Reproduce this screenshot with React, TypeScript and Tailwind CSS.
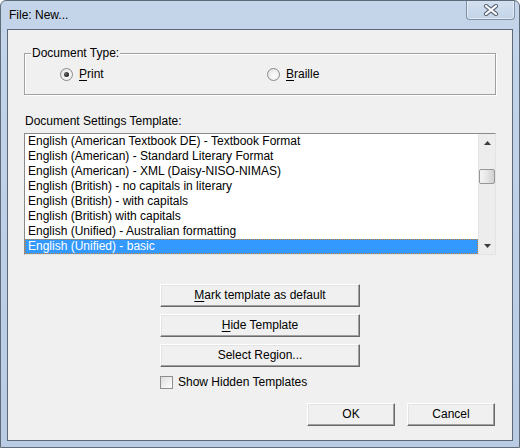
import React from "react";

const font = "font-['Segoe_UI','Liberation_Sans',Arial,sans-serif]";

function Radio({ checked }: { checked?: boolean }) {
  return (
    <span className="flex items-center justify-center w-[13px] h-[13px] rounded-full border border-[#8a8a8a] bg-[radial-gradient(circle_at_60%_60%,#ffffff,#dcdcdc)] shrink-0">
      {checked && <span className="w-[5px] h-[5px] rounded-full bg-[radial-gradient(circle_at_35%_35%,#6a6a6a,#000000)]" />}
    </span>
  );
}

function Btn({ children, className }: { children: React.ReactNode; className?: string }) {
  return (
    <div
      className={
        "flex items-center justify-center h-[23px] bg-[#f0f0f0] border border-t-[#ffffff] border-l-[#ffffff] border-r-[#696969] border-b-[#696969] shadow-[inset_-1px_-1px_0_#a0a0a0,inset_1px_1px_0_#e3e3e3] text-[12px] leading-[15px] text-black " +
        (className ?? "")
      }
    >
      {children}
    </div>
  );
}

const items = [
  "English (American Textbook DE) - Textbook Format",
  "English (American) - Standard Literary Format",
  "English (American) - XML (Daisy-NISO-NIMAS)",
  "English (British) - no capitals in literary",
  "English (British) - with capitals",
  "English (British) with capitals",
  "English (Unified) - Australian formatting",
  "English (Unified) - basic",
];

export default function App() {
  return (
    <div className={"w-[520px] h-[448px] bg-white " + font}>
      <div className="relative w-[520px] h-[448px] border border-[#5f6b79] rounded-t-[6px] bg-gradient-to-b from-[#c4d5ea] via-[#bed0e7] to-[#b9cce4] flex flex-col px-[6px] pb-[6px]">
        {/* title */}
        <div className="h-[28px] flex items-center pl-[2px] text-[12px] leading-[15px] text-black">File: New...</div>
        {/* close button */}
        <div className="absolute top-0 right-[4px] w-[49px] h-[19px] rounded-b-[4px] border border-t-0 border-[#7f90a6] bg-gradient-to-b from-[#d3e0ef] to-[#c3d4e8] shadow-[inset_0_-1px_0_#e4ecf6,inset_1px_0_0_#e4ecf6,inset_-1px_0_0_#e4ecf6] flex items-center justify-center">
          <svg width="16" height="12" viewBox="0 0 16 12">
            <path d="M3 2 L13 10 M13 2 L3 10" stroke="#5b6675" strokeWidth="4.2" strokeLinecap="round" />
            <path d="M3 2 L13 10 M13 2 L3 10" stroke="#ffffff" strokeWidth="2.2" strokeLinecap="round" />
          </svg>
        </div>
        {/* client */}
        <div className="flex-1 border border-[#5a6878] bg-[#f0f0f0] flex flex-col text-[12px] leading-[15px] text-black">
          {/* group box */}
          <div className="relative mt-[23px] ml-[16px] w-[472px] h-[42px] border border-[#a0a0a0] shadow-[inset_1px_1px_0_#ffffff,1px_1px_0_#ffffff]">
            <span className="absolute left-[6px] top-[-8px] px-[1px] bg-[#f0f0f0]">Document Type:</span>
            <div className="flex pl-[35px] pt-[13px]">
              <div className="flex items-center gap-[6px] w-[207px]">
                <Radio checked />
                <span>
                  <u className="underline-offset-2">P</u>rint
                </span>
              </div>
              <div className="flex items-center gap-[6px]">
                <Radio />
                <span>
                  <u className="underline-offset-2">B</u>raille
                </span>
              </div>
            </div>
          </div>

          <div className="mt-[19px] ml-[17px]">Document Settings Template:</div>

          {/* list box */}
          <div className="mt-[4px] ml-[16px] w-[472px] h-[122px] flex bg-white border border-t-[#8a8a8a] border-l-[#8a8a8a] border-r-[#e3e3e3] border-b-[#e3e3e3]">
            <div className="flex-1 flex flex-col">
              {items.map((t, i) =>
                i === items.length - 1 ? (
                  <div
                    key={t}
                    className="h-[15px] pl-[3px] leading-[15px] bg-[#3399ff] text-white outline-1 outline-dotted outline-[#c98236] -outline-offset-1 whitespace-nowrap"
                  >
                    {t}
                  </div>
                ) : (
                  <div key={t} className="h-[15px] pl-[3px] leading-[15px] whitespace-nowrap">
                    {t}
                  </div>
                )
              )}
            </div>
            <div className="w-[17px] flex flex-col bg-[#ededed] border-l border-[#e4e4e4]">
              <div className="h-[17px] flex items-center justify-center">
                <svg width="7" height="4" viewBox="0 0 7 4">
                  <path d="M0 4 L3.5 0 L7 4 Z" fill="#3c3c3c" />
                </svg>
              </div>
              <div className="h-[18px]" />
              <div className="h-[15px] w-[16px] rounded-[2px] border border-[#979797] bg-gradient-to-r from-[#f5f5f5] via-[#e6e6e6] to-[#cfcfcf]" />
              <div className="flex-1" />
              <div className="h-[17px] flex items-center justify-center">
                <svg width="7" height="4" viewBox="0 0 7 4">
                  <path d="M0 0 L7 0 L3.5 4 Z" fill="#3c3c3c" />
                </svg>
              </div>
            </div>
          </div>

          {/* buttons */}
          <div className="mt-[29px] w-[200px] mx-auto flex flex-col gap-[7px]">
            <Btn>
              <span>
                <u className="underline-offset-2">M</u>ark template as default
              </span>
            </Btn>
            <Btn>
              <span>
                <u className="underline-offset-2">H</u>ide Template
              </span>
            </Btn>
            <Btn>Select Region...</Btn>
            <div className="mt-[1px] flex items-center gap-[5px] h-[15px]">
              <span className="w-[13px] h-[13px] border border-[#8e8f8f] bg-gradient-to-br from-[#dedede] to-[#ffffff] shrink-0" />
              <span>Show Hidden Templates</span>
            </div>
          </div>

          <div className="mt-[13px] flex justify-end gap-[12px] pr-[17px]">
            <Btn className="w-[88px]">OK</Btn>
            <Btn className="w-[88px]">Cancel</Btn>
          </div>
        </div>
      </div>
    </div>
  );
}
